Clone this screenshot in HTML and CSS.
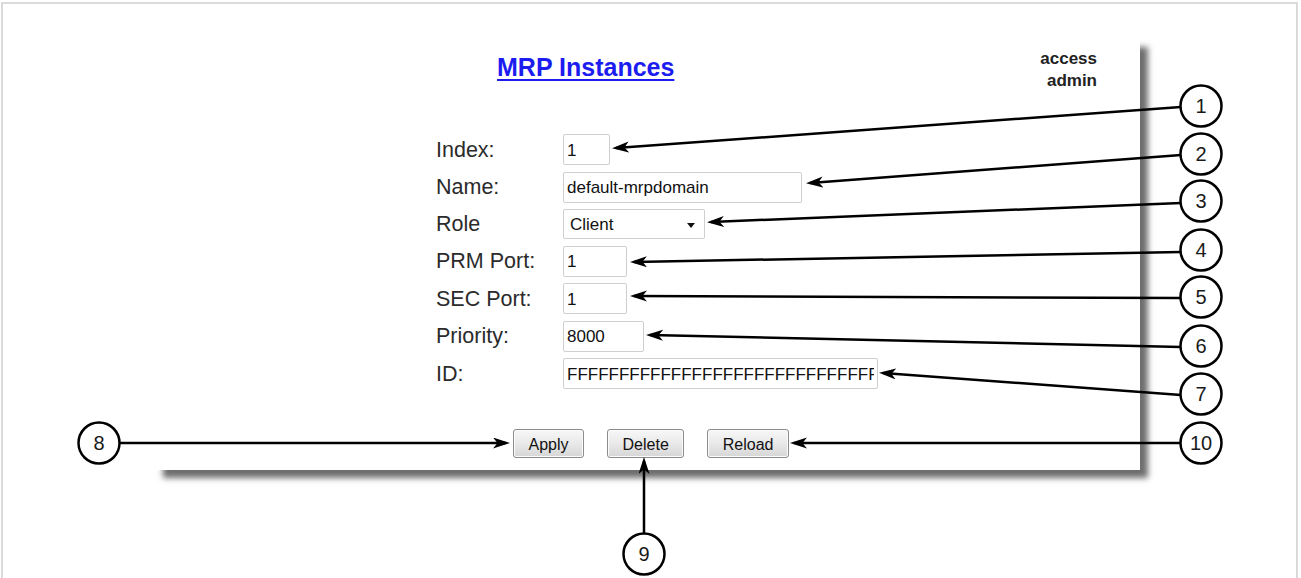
FILE: index.html
```html
<!DOCTYPE html>
<html>
<head>
<meta charset="utf-8">
<link rel="stylesheet" href="styles.css">
</head>
<body>
<div class="frame">
  <div class="panel">
    <div class="header">
      <a class="title" href="#">MRP Instances</a>
      <div class="user">access<br>admin</div>
    </div>
    <div class="form">
      <label class="lbl">Index:</label>
      <input class="field w-index" type="text" value="1">
      <label class="lbl">Name:</label>
      <input class="field w-name" type="text" value="default-mrpdomain">
      <label class="lbl">Role</label>
      <span class="select"><span class="select-text">Client</span></span>
      <label class="lbl">PRM Port:</label>
      <input class="field w-port" type="text" value="1">
      <label class="lbl">SEC Port:</label>
      <input class="field w-port" type="text" value="1">
      <label class="lbl">Priority:</label>
      <input class="field w-prio" type="text" value="8000">
      <label class="lbl">ID:</label>
      <input class="field w-id" type="text" value="FFFFFFFFFFFFFFFFFFFFFFFFFFFFFFFF">
    </div>
    <div class="buttons">
      <button class="btn">Apply</button>
      <button class="btn">Delete</button>
      <button class="btn">Reload</button>
    </div>
  </div>
</div>

<svg class="callouts" width="1301" height="578" viewBox="0 0 1301 578" xmlns="http://www.w3.org/2000/svg">
  <defs>
    <marker id="ah" markerUnits="userSpaceOnUse" markerWidth="18" markerHeight="12" refX="13" refY="5.5" orient="auto">
      <path d="M0,0 L17,5.5 L0,11 L4.5,5.5 Z" fill="#000"/>
    </marker>
  </defs>
  <g stroke="#000" stroke-width="2.5" fill="none" marker-end="url(#ah)">
    <line x1="1181" y1="107" x2="616" y2="148"/>
    <line x1="1181" y1="155" x2="810" y2="183"/>
    <line x1="1181" y1="203" x2="711" y2="222"/>
    <line x1="1181" y1="252" x2="634" y2="262"/>
    <line x1="1181" y1="298" x2="634" y2="296"/>
    <line x1="1181" y1="347" x2="650" y2="335"/>
    <line x1="1181" y1="395" x2="883" y2="373"/>
    <line x1="120" y1="443" x2="506" y2="443"/>
    <line x1="644" y1="533" x2="644" y2="461"/>
    <line x1="1181" y1="443" x2="794" y2="443"/>
  </g>
  <g stroke="#000" stroke-width="2.5" fill="#fff">
    <circle cx="1201" cy="106" r="20.5"/>
    <circle cx="1201" cy="154" r="20.5"/>
    <circle cx="1201" cy="201" r="20.5"/>
    <circle cx="1201" cy="250" r="20.5"/>
    <circle cx="1201" cy="297" r="20.5"/>
    <circle cx="1201" cy="346" r="20.5"/>
    <circle cx="1201" cy="394" r="20.5"/>
    <circle cx="99" cy="443" r="20.5"/>
    <circle cx="644" cy="554" r="20.5"/>
    <circle cx="1201" cy="443" r="20.5"/>
  </g>
  <g class="num" text-anchor="middle">
    <text x="1201" y="113">1</text>
    <text x="1201" y="161">2</text>
    <text x="1201" y="208">3</text>
    <text x="1201" y="257">4</text>
    <text x="1201" y="304">5</text>
    <text x="1201" y="353">6</text>
    <text x="1201" y="401">7</text>
    <text x="99" y="450">8</text>
    <text x="644" y="561">9</text>
    <text x="1201" y="450">10</text>
  </g>
</svg>
</body>
</html>
```

FILE: styles.css
```css
html, body {
  margin: 0;
  padding: 0;
  background: #fff;
}
body {
  position: relative;
  width: 1301px;
  height: 578px;
  overflow: hidden;
  font-family: "Liberation Sans", Arial, sans-serif;
}
.frame {
  margin: 2px 0 0 1px;
  width: 1297px;
  height: 576px;
  border: 2px solid #dadada;
  border-bottom: none;
  padding: 35px 0 0 152px;
  box-sizing: border-box;
}
.panel {
  width: 985px;
  height: 431px;
  background: #fff;
  box-shadow: 8px 8px 6px #6e6e6e;
  box-sizing: border-box;
  padding-top: 9px;
  display: flex;
  flex-direction: column;
}
.header {
  display: flex;
  justify-content: space-between;
  align-items: flex-start;
  padding: 0 43px 0 342px;
}
.title {
  margin-top: 5px;
  font-size: 25px;
  font-weight: bold;
  color: #1c1cf0;
  text-decoration: underline;
  text-decoration-thickness: 2px;
  text-underline-offset: 3px;
}
.user {
  font-size: 17px;
  line-height: 22px;
  font-weight: bold;
  color: #222;
  text-align: right;
}
.form {
  margin: 42px 0 0 281px;
  display: grid;
  grid-template-columns: 127px auto;
  row-gap: 6.5px;
  align-items: center;
  justify-items: start;
}
.lbl {
  font-size: 21.5px;
  color: #2b2b2b;
  line-height: 24px;
}
.field {
  box-sizing: border-box;
  height: 31px;
  margin: 0;
  padding: 2px 3px 0 3px;
  border: 1px solid #cfcfcf;
  border-radius: 2px;
  font-family: "Liberation Sans", Arial, sans-serif;
  font-size: 17px;
  color: #111;
  background: #fff;
  outline: none;
}
.w-index { width: 47px; }
.w-name { width: 239px; }
.w-port { width: 64px; }
.w-prio { width: 81px; }
.w-id { width: 315px; }
.select {
  position: relative;
  box-sizing: border-box;
  display: flex;
  align-items: center;
  width: 142px;
  height: 30px;
  padding: 2px 0 0 6px;
  border: 1px solid #cfcfcf;
  border-radius: 2px;
  font-size: 17px;
  color: #111;
  background: #fff;
}
.select::after {
  content: "";
  position: absolute;
  right: 9px;
  top: 13px;
  border-left: 4px solid transparent;
  border-right: 4px solid transparent;
  border-top: 5px solid #111;
}
.buttons {
  margin: 40px 0 0 358px;
  display: flex;
  gap: 23px;
}
.btn {
  box-sizing: border-box;
  height: 29px;
  padding: 2px 14.5px 0 14.5px;
  border: 1px solid #8c8c8c;
  border-radius: 3px;
  background: linear-gradient(#f7f7f7, #e9e9e9 50%, #d6d6d6);
  font-family: "Liberation Sans", Arial, sans-serif;
  font-size: 16px;
  color: #111;
  box-shadow: inset 0 0 0 1px #fbfbfb;
}
.callouts {
  position: absolute;
  left: 0;
  top: 0;
  pointer-events: none;
}
.num text {
  font-family: "Liberation Sans", Arial, sans-serif;
  font-size: 20px;
  fill: #1a1a1a;
}
```
